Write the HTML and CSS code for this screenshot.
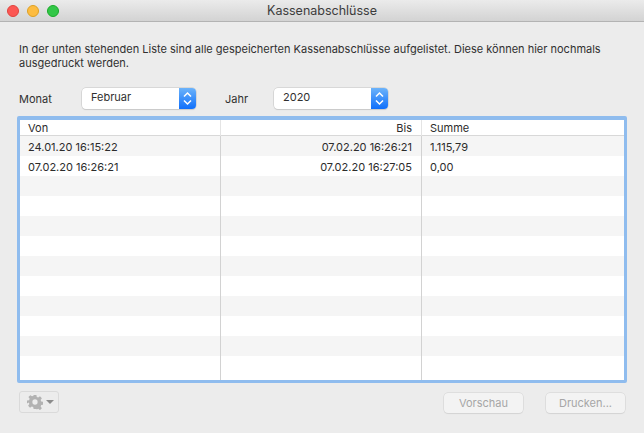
FILE: index.html
```html
<!DOCTYPE html>
<html lang="de">
<head>
<meta charset="utf-8">
<title>Kassenabschlüsse</title>
<link rel="stylesheet" href="styles.css">
</head>
<body>
<div class="window">
  <header class="titlebar">
    <div class="lights">
      <span class="light red"></span>
      <span class="light yellow"></span>
      <span class="light green"></span>
    </div>
    <div class="title">Kassenabschlüsse</div>
  </header>
  <main class="content">
    <p class="intro">In der unten stehenden Liste sind alle gespeicherten Kassenabschlüsse aufgelistet. Diese können hier nochmals ausgedruckt werden.</p>
    <div class="filters">
      <span class="label label-monat">Monat</span>
      <div class="select select-monat">
        <span class="select-value">Februar</span>
        <span class="stepper"><svg width="9" height="15" viewBox="0 0 9 15"><path d="M1 5.500 4.500 2 8 5.500M1 9.500 4.500 13 8 9.500" fill="none" stroke="#fff" stroke-width="1.500"/></svg></span>
      </div>
      <span class="label label-jahr">Jahr</span>
      <div class="select select-jahr">
        <span class="select-value">2020</span>
        <span class="stepper"><svg width="9" height="15" viewBox="0 0 9 15"><path d="M1 5.500 4.500 2 8 5.500M1 9.500 4.500 13 8 9.500" fill="none" stroke="#fff" stroke-width="1.500"/></svg></span>
      </div>
    </div>
    <div class="table-frame">
      <div class="row head">
        <div class="cell">Von</div><div class="cell right">Bis</div><div class="cell">Summe</div>
      </div>
      <div class="row"><div class="cell">24.01.20 16:15:22</div><div class="cell right">07.02.20 16:26:21</div><div class="cell">1.115,79</div></div>
      <div class="row"><div class="cell">07.02.20 16:26:21</div><div class="cell right">07.02.20 16:27:05</div><div class="cell">0,00</div></div>
      <div class="row"><div class="cell"></div><div class="cell"></div><div class="cell"></div></div>
      <div class="row"><div class="cell"></div><div class="cell"></div><div class="cell"></div></div>
      <div class="row"><div class="cell"></div><div class="cell"></div><div class="cell"></div></div>
      <div class="row"><div class="cell"></div><div class="cell"></div><div class="cell"></div></div>
      <div class="row"><div class="cell"></div><div class="cell"></div><div class="cell"></div></div>
      <div class="row"><div class="cell"></div><div class="cell"></div><div class="cell"></div></div>
      <div class="row"><div class="cell"></div><div class="cell"></div><div class="cell"></div></div>
      <div class="row"><div class="cell"></div><div class="cell"></div><div class="cell"></div></div>
      <div class="row"><div class="cell"></div><div class="cell"></div><div class="cell"></div></div>
      <div class="row"><div class="cell"></div><div class="cell"></div><div class="cell"></div></div>
      <div class="row filler"><div class="cell"></div><div class="cell"></div><div class="cell"></div></div>
    </div>
    <footer class="actions">
      <div class="gear-button">
        <svg class="gear" width="16" height="16" viewBox="0 0 17 17"><path fill="#b2b2b2" fill-rule="evenodd" d="M7 1h3l.4 2.200 1.500.6 1.900-1.300 2 2-1.300 1.900.6 1.500 2.200.4v3l-2.200.4-.6 1.500 1.300 1.900-2 2-1.900-1.300-1.500.6L10 16H7l-.4-2.200-1.500-.6-1.900 1.300-2-2 1.300-1.900-.6-1.500L0 10V7l2.200-.4.6-1.500-1.300-1.900 2-2 1.900 1.300 1.500-.6zM8.500 5.700a2.800 2.800 0 1 0 0 5.600 2.800 2.800 0 0 0 0-5.600z"/></svg>
        <span class="caret"></span>
      </div>
      <div class="buttons">
        <div class="button">Vorschau</div>
        <div class="button">Drucken...</div>
      </div>
    </footer>
  </main>
</div>
</body>
</html>
```
FILE: styles.css
```css
* { box-sizing: border-box; }
html, body { margin: 0; padding: 0; }
body {
  width: 644px;
  height: 433px;
  overflow: hidden;
  background: #ececec;
  font-family: Inter, "Liberation Sans", sans-serif;
  font-size: 11px;
  color: #303030;
}
.window { display: flex; flex-direction: column; height: 433px; }
.titlebar {
  height: 22px;
  flex: none;
  position: relative;
  display: flex;
  align-items: center;
  justify-content: center;
  background: linear-gradient(#ebebeb, #d3d3d3);
  border-bottom: 1px solid #b3b3b3;
}
.lights { position: absolute; left: 7px; top: 5px; display: flex; gap: 8px; }
.light { width: 12px; height: 12px; border-radius: 50%; }
.red { background: #fc5753; border: 1px solid #e0443e; }
.yellow { background: #fdbc40; border: 1px solid #dea123; }
.green { background: #33c748; border: 1px solid #1aab29; }
.title { font-size: 12.500px; color: #3c3c3c; }
.content { flex: 1; padding: 20px 17px 0 19px; display: flex; flex-direction: column; }
.intro { margin: 0; line-height: 14px; height: 28px; width: 600px; }
.filters { display: flex; align-items: center; height: 22px; margin-top: 17px; }
.label { flex: none; }
.label-monat { width: 63px; padding-top: 2px; }
.label-jahr { width: 49px; margin-left: 29px; padding-top: 1px; }
.select {
  display: flex;
  height: 21px;
  background: #fff;
  border-radius: 4px;
  box-shadow: 0 0 0 .5px #c4c4c4, 0 1px 1px rgba(0,0,0,.12);
  justify-content: space-between;
  align-items: stretch;
  flex: none;
}
.select-monat { width: 114px; }
.select-jahr { width: 114px; }
.select-value { padding: 0 0 0 9px; line-height: 18px; }
.stepper {
  width: 17px;
  border-radius: 0 4px 4px 0;
  background: linear-gradient(#6cb3fa, #0f6ffb);
  display: flex;
  align-items: center;
  justify-content: center;
}
.table-frame {
  margin-top: 7px;
  margin-left: -2px;
  width: 610px;
  height: 267px;
  background: #fff;
  border: 3px solid #8fbcee;
  border-top-width: 4px;
  border-radius: 2px;
  overflow: hidden;
}
.row { display: grid; grid-template-columns: 201px 201px 1fr; height: 20px; }
.row:nth-child(even) { background: #f5f5f5; }
.row:nth-child(odd) { background: #fff; }
.row.head {
  height: 16px;
  background: #fff;
  border-bottom: 1px solid #d8d8d8;
}
.row.filler { height: 24px; background: #fff; }
.cell {
  padding: 1px 8px 0;
  line-height: 20px;
  border-right: 1px solid #d2d2d2;
  color: #2c2c2c;
}
.cell:last-child { border-right: 0; }
.cell.right { text-align: right; padding-right: 9px; }
.head .cell { padding-top: 0; line-height: 16px; border-right-color: #e4e4e4; }
.actions {
  display: flex;
  justify-content: space-between;
  margin-top: 8px;
  align-items: flex-start;
}
.gear-button {
  width: 40px;
  height: 22px;
  border: 1px solid #dadada;
  border-radius: 3px;
  display: flex;
  align-items: center;
  padding-left: 7px;
  gap: 3px;
}
.gear { flex: none; }
.caret {
  width: 0;
  height: 0;
  border-left: 4px solid transparent;
  border-right: 4px solid transparent;
  border-top: 4px solid #8c8c8c;
}
.buttons { display: flex; gap: 23px; margin-top: 2px; margin-right: 2px; }
.button {
  width: 79px;
  height: 20px;
  background: #f3f3f3;
  border-radius: 4px;
  box-shadow: 0 0 0 .5px #d0d0d0, 0 1px 1px rgba(0,0,0,.08);
  color: #a6a6a6;
  text-align: center;
  line-height: 20px;
}
```
